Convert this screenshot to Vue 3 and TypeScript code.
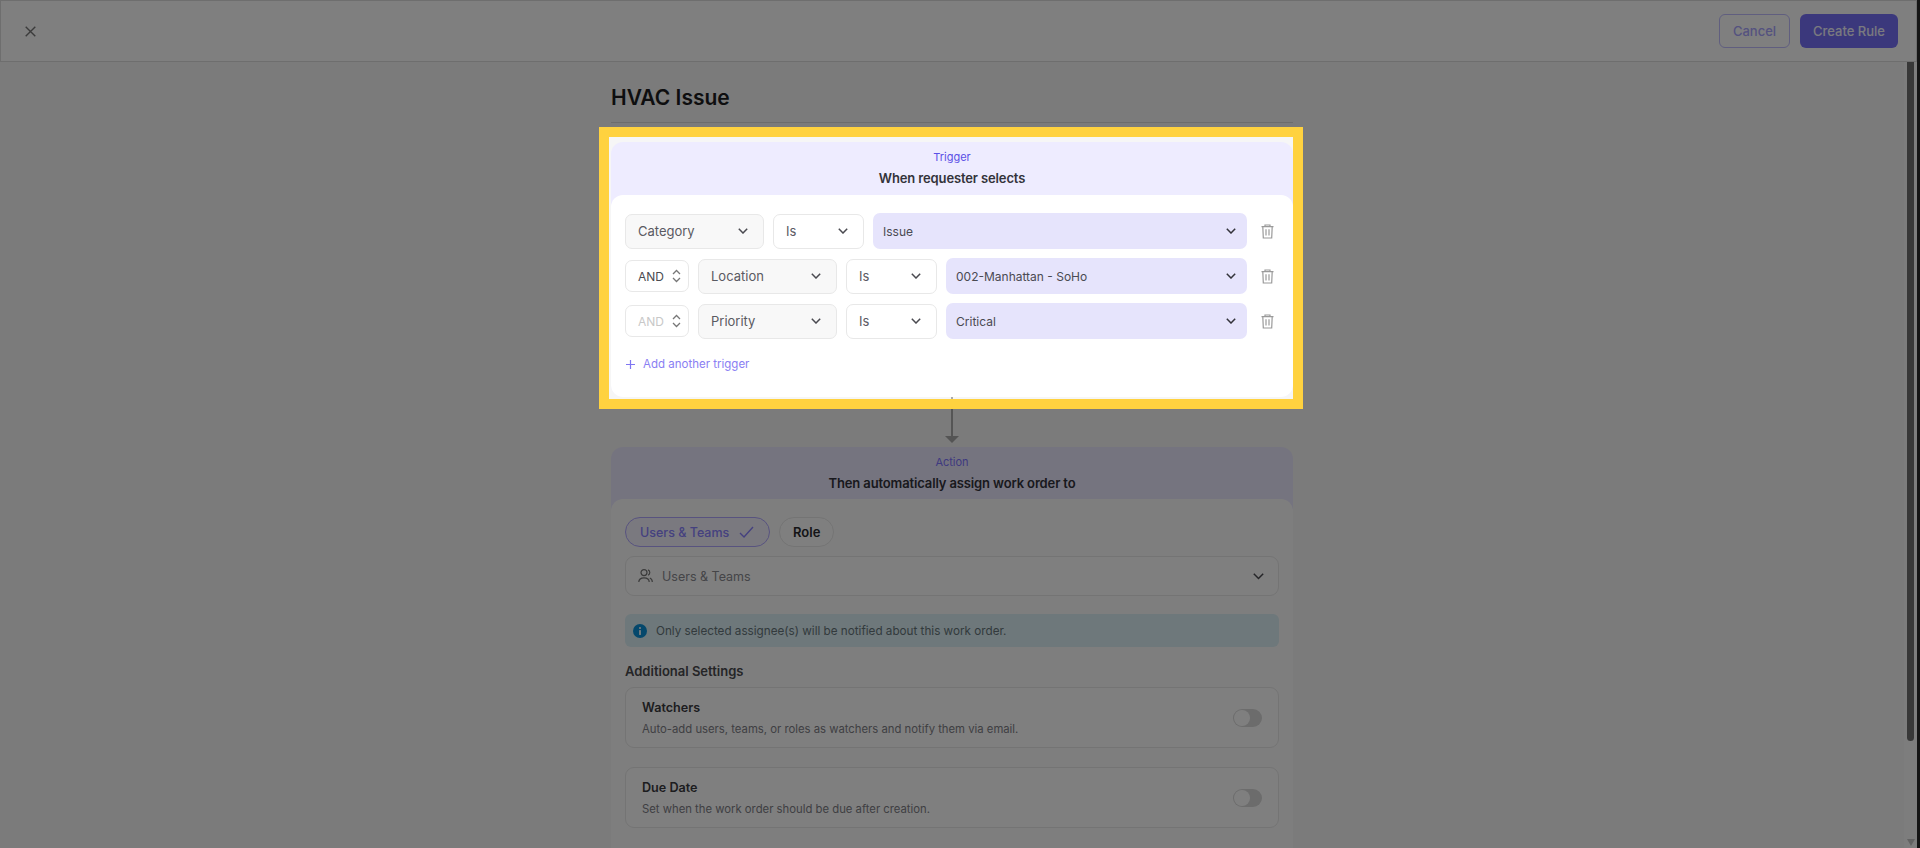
<script setup lang="ts">
interface TriggerRow {
  field: string
  value: string
  joiner?: string
  joinerMuted?: boolean
}

const triggers: TriggerRow[] = [
  { field: 'Category', value: 'Issue' },
  { field: 'Location', value: '002-Manhattan - SoHo', joiner: 'AND' },
  { field: 'Priority', value: 'Critical', joiner: 'AND', joinerMuted: true },
]

const settings = [
  { title: 'Watchers', text: 'Auto-add users, teams, or roles as watchers and notify them via email.' },
  { title: 'Due Date', text: 'Set when the work order should be due after creation.' },
]
</script>

<template>
  <div class="page">
    <header class="topbar">
      <svg class="close" width="11" height="11" viewBox="0 0 11 11" fill="none">
        <path d="M.7.7l9.6 9.6M10.3.7L.7 10.3" stroke="#777" stroke-width="1.4" />
      </svg>
      <div class="top-actions">
        <button class="btn btn-outline">Cancel</button>
        <button class="btn btn-primary">Create Rule</button>
      </div>
    </header>

    <main class="content">
      <div class="column">
        <h1 class="title">HVAC Issue</h1>

        <section class="card">
          <div class="card-head">
            <div class="eyebrow">Trigger</div>
            <div class="head-text">When requester selects</div>
          </div>
          <div class="card-body trigger-body">
            <div v-for="row in triggers" :key="row.field" class="trigger-row">
              <div v-if="row.joiner" class="select joiner" :class="{ muted: row.joinerMuted }">
                <span>{{ row.joiner }}</span>
                <svg width="9" height="14" viewBox="0 0 9 14" fill="none">
                  <path d="M1 5l3.5-3.5L8 5M1 9l3.5 3.5L8 9" stroke="#777" stroke-width="1.3" />
                </svg>
              </div>
              <div class="select field">
                <span>{{ row.field }}</span>
                <svg width="10" height="6" viewBox="0 0 10 6" fill="none">
                  <path d="M.8.8L5 5l4.2-4.2" stroke="#4a4a50" stroke-width="1.5" />
                </svg>
              </div>
              <div class="select op">
                <span>Is</span>
                <svg width="10" height="6" viewBox="0 0 10 6" fill="none">
                  <path d="M.8.8L5 5l4.2-4.2" stroke="#4a4a50" stroke-width="1.5" />
                </svg>
              </div>
              <div class="select value">
                <span>{{ row.value }}</span>
                <svg width="10" height="6" viewBox="0 0 10 6" fill="none">
                  <path d="M.8.8L5 5l4.2-4.2" stroke="#33333a" stroke-width="1.5" />
                </svg>
              </div>
              <svg class="trash" width="13" height="15" viewBox="0 0 13 15" fill="none">
                <path d="M.5 2.6h12M4 2.6V1h5v1.6M1.8 2.6l.5 11.4h8.4l.5-11.4M5 5.2v6.4M8 5.2v6.4" stroke="#9a9a9a" stroke-width="1.2" />
              </svg>
            </div>
            <div class="add-trigger">
              <svg width="9" height="9" viewBox="0 0 9 9" fill="none">
                <path d="M4.5 0v9M0 4.5h9" stroke="#7f76f2" stroke-width="1.2" />
              </svg>
              <span>Add another trigger</span>
            </div>
          </div>
        </section>

        <div class="connector">
          <span class="connector-line"></span>
          <span class="connector-head"></span>
        </div>

        <section class="card action-card">
          <div class="card-head">
            <div class="eyebrow action-eyebrow">Action</div>
            <div class="head-text">Then automatically assign work order to</div>
          </div>
          <div class="card-body action-body">
            <div class="chips">
              <div class="chip chip-on">
                <span>Users &amp; Teams</span>
                <svg width="15" height="12" viewBox="0 0 15 12" fill="none">
                  <path d="M1 7l4 4L14 1" stroke="#8a82ff" stroke-width="1.4" />
                </svg>
              </div>
              <div class="chip">Role</div>
            </div>
            <div class="assignee">
              <svg width="15" height="14" viewBox="0 0 15 14" fill="none">
                <circle cx="6" cy="3.6" r="3" stroke="#777" stroke-width="1.2" />
                <path d="M.8 13c0-2.6 2.2-4.2 5.2-4.2s5.2 1.6 5.2 4.2M10 .9c1.2.5 1.8 1.6 1.8 2.7S11.200 5.800 10 6.300M11.800 9c1.500.6 2.500 2 2.500 4" stroke="#777" stroke-width="1.2" />
              </svg>
              <span class="assignee-text">Users &amp; Teams</span>
              <svg width="11" height="7" viewBox="0 0 11 7" fill="none">
                <path d="M.8.8l4.700 4.700L10.200.8" stroke="#4a4a50" stroke-width="1.5" />
              </svg>
            </div>
            <div class="notice">
              <svg width="14" height="14" viewBox="0 0 16 16">
                <circle cx="8" cy="8" r="8" fill="#0a90d8" />
                <rect x="7" y="7" width="2" height="5.5" fill="#fff" />
                <rect x="7" y="3.6" width="2" height="2" fill="#fff" />
              </svg>
              <span>Only selected assignee(s) will be notified about this work order.</span>
            </div>
            <div class="settings-title">Additional Settings</div>
            <div v-for="item in settings" :key="item.title" class="setting">
              <div>
                <div class="setting-title">{{ item.title }}</div>
                <div class="setting-text">{{ item.text }}</div>
              </div>
              <span class="toggle"><span class="knob"></span></span>
            </div>
          </div>
        </section>
      </div>
    </main>

    <div class="scrollbar">
      <span class="thumb"></span>
      <span class="arrow-down"></span>
    </div>
    <div class="edge"></div>

    <div class="spotlight"></div>
  </div>
</template>

<style>
html,
body {
  margin: 0;
  height: 100%;
  overflow: hidden;
}
</style>

<style scoped>
.page {
  position: relative;
  width: 1920px;
  height: 848px;
  overflow: hidden;
  background: #f6f6f6;
  font-family: Inter, 'Noto Sans', sans-serif;
  color: #2a2a2e;
}

.topbar {
  width: 1917px;
  height: 62px;
  box-sizing: border-box;
  display: flex;
  align-items: center;
  justify-content: space-between;
  padding: 0 18px 0 24px;
  background: #ffffff;
  border: 1px solid #dcdcdc;
}

.top-actions {
  display: flex;
  gap: 10px;
}

.btn {
  height: 34px;
  box-sizing: border-box;
  border-radius: 6px;
  font: 500 13px Inter, sans-serif;
  padding: 0;
}

.btn-outline {
  width: 71px;
  background: transparent;
  border: 1.5px solid #c0bcff;
  color: #a8a4ff;
}

.btn-primary {
  width: 98px;
  background: #7670f8;
  border: 0;
  color: #f4f4ff;
}

.content {
  width: 1904px;
  display: flex;
  justify-content: center;
}

.column {
  width: 682px;
}

.title {
  margin: 22px 0 19px;
  padding-bottom: 10px;
  font-size: 21px;
  line-height: 28px;
  font-weight: 600;
  color: #1c1c20;
  border-bottom: 1px solid #d8d8d8;
}

.card {
  background: #eeecff;
  border-radius: 12px;
}

.card-head {
  height: 53px;
  box-sizing: border-box;
  padding-top: 7px;
  text-align: center;
}

.eyebrow {
  font-size: 11px;
  line-height: 16px;
  color: #5b50e6;
}

.head-text {
  margin-top: 4px;
  font-size: 13px;
  line-height: 18px;
  font-weight: 600;
  letter-spacing: -0.01em;
  color: #33333a;
}

.card-body {
  background: #ffffff;
  border-radius: 12px;
  box-sizing: border-box;
}

.trigger-body {
  height: 202px;
  padding: 18px 14px 0;
}

.trigger-row {
  display: flex;
  align-items: center;
  gap: 9px;
  height: 36px;
  margin-bottom: 9px;
}

.select {
  height: 35px;
  box-sizing: border-box;
  flex: none;
  display: flex;
  align-items: center;
  justify-content: space-between;
  padding: 0 15px 0 12px;
  border: 1.5px solid #e8e8e8;
  border-radius: 7px;
  font-size: 13px;
  color: #5a5a62;
}

.joiner {
  width: 64px;
  height: 32px;
  padding: 0 7px 0 12px;
  background: #ffffff;
  font-size: 12px;
  color: #4a4a50;
}

.joiner.muted {
  color: #c8c8c8;
}

.field {
  width: 139px;
  background: #f8f8f8;
}

.op {
  width: 91px;
  background: #ffffff;
}

.value {
  flex: 1;
  height: 36px;
  padding: 0 11px 0 10px;
  background: #e6e4fc;
  border: 0;
  font-size: 12px;
  color: #4a4a52;
}

.trash {
  flex: none;
  margin: 0 5px 0 5px;
}

.add-trigger {
  display: flex;
  align-items: center;
  gap: 8px;
  margin-top: 17px;
  padding-left: 1px;
  font-size: 11.5px;
  line-height: 16px;
  color: #8a80f3;
}

.connector {
  height: 50px;
  box-sizing: border-box;
  display: flex;
  flex-direction: column;
  align-items: center;
  padding-bottom: 4px;
}

.connector-line {
  width: 2px;
  flex: 1;
  background: #aaaaaa;
}

.connector-head {
  width: 0;
  height: 0;
  border-left: 7px solid transparent;
  border-right: 7px solid transparent;
  border-top: 7px solid #a8a8a8;
}

.action-card {
  background: #ebe8ff;
}

.action-card .card-head {
  height: 52px;
}

.action-eyebrow {
  color: #7e74ff;
}

.action-body {
  padding: 18px 14px 40px;
  background: #fdfdfd;
}

.chips {
  display: flex;
  gap: 9px;
}

.chip {
  height: 30px;
  box-sizing: border-box;
  display: flex;
  align-items: center;
  gap: 10px;
  padding: 0 13px;
  border: 1.5px solid #e8e8e8;
  border-radius: 15px;
  background: #ffffff;
  font-size: 13px;
  font-weight: 600;
  color: #2a2a2e;
}

.chip-on {
  width: 145px;
  padding: 0 14px;
  background: #f4f3ff;
  border-color: #b0a6ff;
  color: #8a82ff;
  font-size: 12.5px;
  font-weight: 500;
}

.assignee {
  height: 40px;
  box-sizing: border-box;
  margin-top: 9px;
  display: flex;
  align-items: center;
  gap: 9px;
  padding: 0 14px 0 12px;
  border: 1.5px solid #e8e8e8;
  border-radius: 9px;
  background: #ffffff;
  font-size: 12.5px;
  color: #8a8a90;
}

.assignee-text {
  flex: 1;
}

.notice {
  height: 33px;
  margin-top: 18px;
  display: flex;
  align-items: center;
  gap: 9px;
  padding: 0 8px;
  border-radius: 6px;
  background: #dcf0f6;
  font-size: 11.7px;
  color: #66757a;
}

.settings-title {
  margin-top: 15px;
  font-size: 13px;
  line-height: 18px;
  font-weight: 600;
  color: #4a4a4e;
}

.setting {
  height: 61px;
  box-sizing: border-box;
  margin-top: 7px;
  margin-bottom: 19px;
  display: flex;
  align-items: center;
  justify-content: space-between;
  padding: 0 16px;
  border: 1.5px solid #e8e8e8;
  border-radius: 9px;
  background: #ffffff;
}

.setting-title {
  font-size: 12.6px;
  line-height: 18px;
  font-weight: 600;
  color: #3a3a3e;
}

.setting-text {
  margin-top: 4px;
  font-size: 11.3px;
  line-height: 16px;
  color: #808086;
}

.toggle {
  width: 29px;
  height: 18px;
  border-radius: 9px;
  background: #d8d8d8;
  display: flex;
  align-items: center;
  padding-left: 1px;
  box-sizing: border-box;
}

.knob {
  width: 16px;
  height: 16px;
  border-radius: 50%;
  background: #fff;
}

.scrollbar {
  position: absolute;
  top: 62px;
  right: 3px;
  bottom: 0;
  width: 13px;
  background: #fbfbfb;
}

.thumb {
  position: absolute;
  top: 0;
  bottom: 107px;
  left: 3px;
  width: 7px;
  border-radius: 0 0 4px 4px;
  background: #707070;
}

.arrow-down {
  position: absolute;
  left: 3px;
  bottom: 2px;
  width: 0;
  height: 0;
  border-left: 4px solid transparent;
  border-right: 4px solid transparent;
  border-top: 7px solid #c4c4c4;
}

.edge {
  position: absolute;
  top: 0;
  right: 0;
  bottom: 0;
  width: 3px;
  background: #2a2a2a;
}

/* dimmed page with the trigger card cut out */
.spotlight {
  position: absolute;
  left: 599px;
  top: 127px;
  width: 704px;
  height: 282px;
  box-sizing: border-box;
  border: 10px solid #ffd23f;
  box-shadow: 0 0 0 2000px rgba(0, 0, 0, 0.5);
}
</style>
